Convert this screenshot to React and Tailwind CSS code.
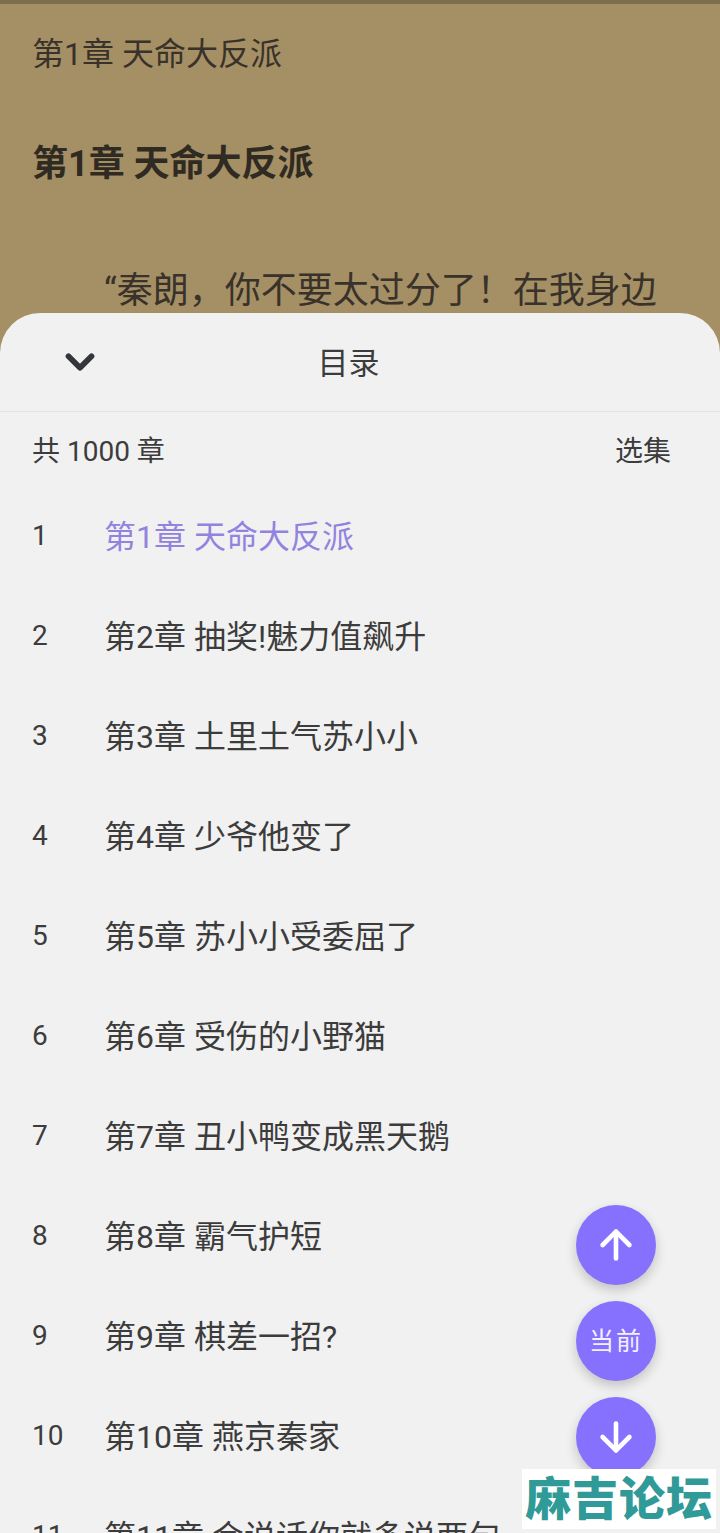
// Reader page with the chapter list sheet open
import { ArrowDown, ArrowUp, ChevronDown } from "lucide-react";

const FONT = 'Roboto, "Noto Sans CJK SC", "Noto Sans", sans-serif';

const chapters = [
  "第1章 天命大反派",
  "第2章 抽奖!魅力值飙升",
  "第3章 土里土气苏小小",
  "第4章 少爷他变了",
  "第5章 苏小小受委屈了",
  "第6章 受伤的小野猫",
  "第7章 丑小鸭变成黑天鹅",
  "第8章 霸气护短",
  "第9章 棋差一招?",
  "第10章 燕京秦家",
  "第11章 会说话你就多说两句",
];

const Fab = ({ children }) => (
  <button className="w-20 h-20 rounded-full bg-[#8670fe] text-white flex items-center justify-center shadow-[0_5px_12px_rgba(0,0,0,0.2)]">
    {children}
  </button>
);

export default function App() {
  return (
    <div
      className="relative w-[720px] h-[1533px] overflow-hidden bg-[#a58f65] text-[#38322a]"
      style={{ fontFamily: FONT }}
    >
      {/* Reader behind the sheet */}
      <div className="h-1 bg-[#7d6f4e]" />
      <div className="pl-[32px]">
        <p className="mt-[27px] text-[32px] leading-[46px]">第1章 天命大反派</p>
        <h1 className="mt-[60px] text-[36px] leading-[54px] font-bold text-[#2f2a22]">
          第1章 天命大反派
        </h1>
        <p className="mt-[73px] pl-[72px] text-[36px] leading-[54px] whitespace-nowrap">
          “秦朗，你不要太过分了！在我身边
        </p>
      </div>

      {/* Chapter list sheet */}
      <div className="absolute inset-x-0 top-[313px] bottom-0 bg-[#f1f1f1] rounded-t-[40px] overflow-hidden text-[#3c3c3c]">
        <div className="relative h-[99px] border-b border-[#e5e5e5] flex items-center justify-center">
          <ChevronDown
            className="absolute left-[57px] top-[26px] text-[#33363b]"
            size={46}
            strokeWidth={3}
          />
          <span className="text-[31px] leading-[44px] ml-[-23px] mt-[4px]">目录</span>
        </div>
        <div className="h-[75px] pl-[32px] pr-[49px] pt-[4px] flex items-center justify-between text-[28px]">
          <span>共 1000 章</span>
          <span>选集</span>
        </div>
        <ul>
          {chapters.map((title, i) => (
            <li key={title} className="h-[100px] flex items-center pl-[32px]">
              <span className="w-[72px] text-[28px] leading-[40px] mb-[3px] shrink-0">{i + 1}</span>
              <span
                className={`text-[32px] leading-[46px] whitespace-nowrap ${i === 0 ? "text-[#9283df]" : ""}`}
              >
                {title}
              </span>
            </li>
          ))}
        </ul>
      </div>

      {/* Jump buttons */}
      <div className="absolute left-[576px] top-[1205px] flex flex-col gap-4">
        <Fab>
          <ArrowUp size={46} strokeWidth={2.4} />
        </Fab>
        <Fab>
          <span className="text-[25px] leading-none tracking-[2px] text-[#f2efff]">当前</span>
        </Fab>
        <Fab>
          <ArrowDown size={46} strokeWidth={2.4} />
        </Fab>
      </div>

      {/* Forum watermark */}
      <div className="absolute left-[522px] top-[1469px] w-[194px] h-[60px] bg-white flex items-center justify-center">
        <span className="text-[46px] leading-none font-black text-[#2f9a98] tracking-[1px] whitespace-nowrap">
          麻吉论坛
        </span>
      </div>
    </div>
  );
}
